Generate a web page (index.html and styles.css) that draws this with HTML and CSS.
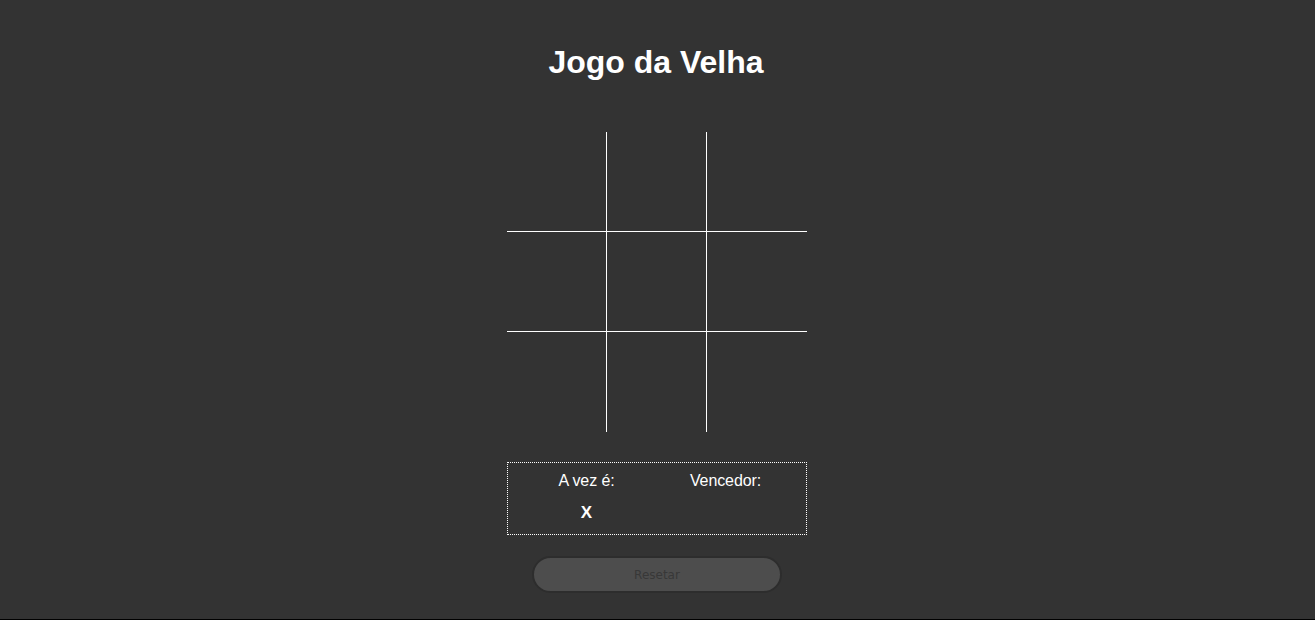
FILE: index.html
```html
<!DOCTYPE html>
<html lang="pt">
<head>
<meta charset="utf-8">
<title>Jogo da Velha</title>
<link rel="stylesheet" href="styles.css">
</head>
<body>
<main class="app">
  <h1 class="title">Jogo da Velha</h1>
  <div class="board">
    <div class="cell"></div><div class="cell"></div><div class="cell last-col"></div>
    <div class="cell"></div><div class="cell"></div><div class="cell last-col"></div>
    <div class="cell last-row"></div><div class="cell last-row"></div><div class="cell last-row last-col"></div>
  </div>
  <div class="info">
    <div class="info-col">
      <div class="label">A vez é:</div>
      <div class="value">X</div>
    </div>
    <div class="info-col">
      <div class="label">Vencedor:</div>
      <div class="value"></div>
    </div>
  </div>
  <button class="reset" type="button">Resetar</button>
</main>
</body>
</html>
```

FILE: styles.css
```css
html {
  background: #000;
}
body {
  margin: 0;
  height: 619px;
  background: #333333;
  font-family: "Liberation Sans", Arial, sans-serif;
  color: #fff;
}
.app {
  display: flex;
  flex-direction: column;
  align-items: center;
  padding-right: 1px;
}
.title {
  margin: 44px 2px 0 0;
  font-size: 32px;
  line-height: 37px;
  font-weight: bold;
}
.board {
  margin-top: 51px;
  width: 300px;
  height: 300px;
  display: grid;
  grid-template-columns: repeat(3, 100px);
  grid-template-rows: repeat(3, 100px);
}
.cell {
  box-sizing: border-box;
  border-right: 1px solid #fff;
  border-bottom: 1px solid #fff;
}
.cell.last-col { border-right: none; }
.cell.last-row { border-bottom: none; }
.info {
  margin-top: 30px;
  box-sizing: border-box;
  width: 300px;
  height: 73px;
  border: 1px dotted #fff;
  padding: 9px 11px 0 9px;
  display: grid;
  grid-template-columns: 1fr 1fr;
  text-align: center;
}
.label {
  font-size: 16px;
  line-height: 18px;
  letter-spacing: -0.1px;
}
.value {
  margin-top: 14px;
  font-size: 17px;
  line-height: 18px;
  font-weight: bold;
  min-height: 18px;
}
.reset {
  margin-top: 21px;
  width: 250px;
  height: 37px;
  border: 2px solid #2d2d2d;
  border-radius: 19px;
  background: #4d4d4d;
  color: #383838;
  font-family: "DejaVu Sans", "Liberation Sans", sans-serif;
  font-size: 12px;
}
```
